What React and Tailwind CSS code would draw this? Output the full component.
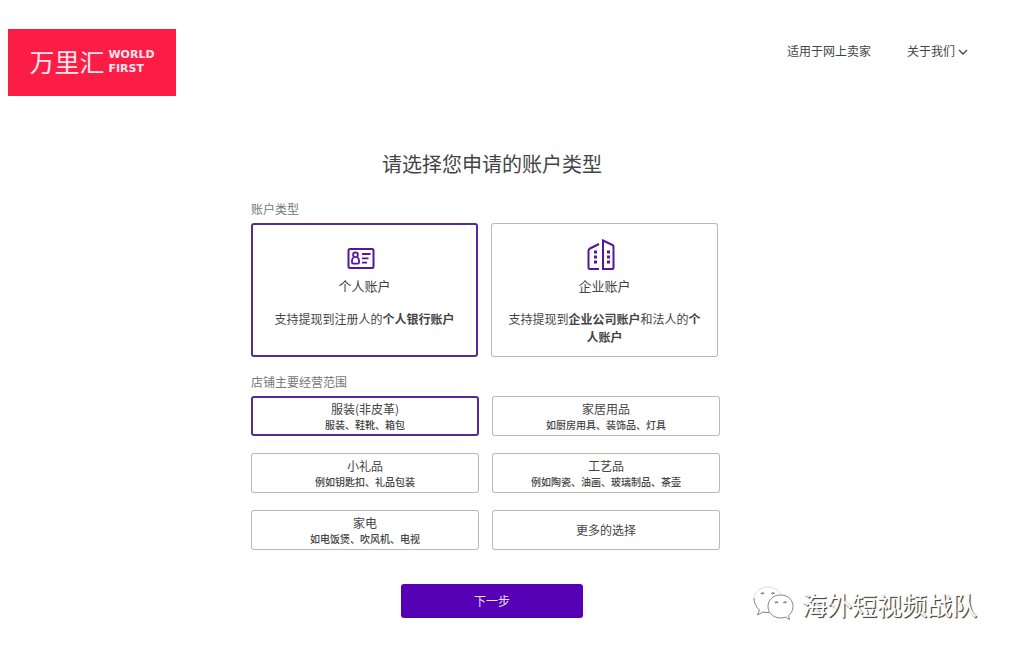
import { useState } from "react";

const accounts = [
  {
    id: "personal",
    title: "个人账户",
    Icon: IdCardIcon,
    description: (
      <>
        支持提现到注册人的<b className="font-bold">个人银行账户</b>
      </>
    ),
  },
  {
    id: "company",
    title: "企业账户",
    Icon: BuildingIcon,
    description: (
      <>
        支持提现到<b className="font-bold">企业公司账户</b>和法人的
        <b className="font-bold">个人账户</b>
      </>
    ),
  },
];

const categories = [
  { id: "clothes", title: "服装(非皮革)", detail: "服装、鞋靴、箱包" },
  { id: "home", title: "家居用品", detail: "如厨房用具、装饰品、灯具" },
  { id: "gifts", title: "小礼品", detail: "例如钥匙扣、礼品包装" },
  { id: "crafts", title: "工艺品", detail: "例如陶瓷、油画、玻璃制品、茶壶" },
  { id: "appliances", title: "家电", detail: "如电饭煲、吹风机、电视" },
  { id: "more", title: "更多的选择" },
];

function IdCardIcon() {
  return (
    <svg className="h-[31px] w-7" viewBox="0 0 28 31" fill="none" stroke="#55159f" strokeWidth="2" aria-hidden="true">
      <rect x="1.500" y="10" width="25" height="19" rx="1.5" />
      <circle cx="8.500" cy="15.800" r="2.400" strokeWidth="1.800" />
      <path
        d="M6.800 18.200C5.600 18.800 5 20 5 21.600v1.800c0 .7.500 1.200 1.200 1.200h4.600c.7 0 1.200-.5 1.200-1.200v-1.800c0-1.600-.6-2.800-1.800-3.400"
        strokeWidth="1.800"
      />
      <path d="M15 15h8.500M15 19.300h6.500M15 23.700h5" strokeWidth="1.800" />
    </svg>
  );
}

function BuildingIcon() {
  return (
    <svg className="h-[31px] w-7" viewBox="0 0 28 31" fill="none" stroke="#55159f" strokeWidth="2" aria-hidden="true">
      <path d="M12 5L3 9.500Q1.500 10.300 1.500 12v16.500q0 1.500 1.500 1.500h9" />
      <path d="M16 1.500l9.500 4.500q1 .5 1 1.700V28.500q0 1.500-1.500 1.500h-9z" />
      <path d="M7 13h3M7 18h3M7 23h3M20 13h3M20 18h3M20 23h3" strokeWidth="2.800" />
    </svg>
  );
}

function Logo() {
  return (
    <a
      href="#home"
      aria-label="万里汇 WORLD FIRST"
      className="flex h-[67px] w-[168px] items-center justify-center gap-1 bg-[#fc1d47] pb-1 text-[#ffe6ec]"
    >
      <span className="text-[25px] leading-8">万里汇</span>
      <span className="flex flex-col pt-0.5 font-['DejaVu_Sans',sans-serif] text-[11px] leading-[14px] font-bold">
        <span>WORLD</span>
        <span>FIRST</span>
      </span>
    </a>
  );
}

function Choice({ name, value, selected, onSelect, className, children }) {
  return (
    <label
      className={`relative flex cursor-pointer flex-col items-center rounded-[3px] text-center ring-inset ${
        selected ? "ring-2 ring-[#562a94]" : "ring-1 ring-[#bababa]"
      } ${className}`}
    >
      <input
        type="radio"
        name={name}
        value={value}
        checked={selected}
        onChange={() => onSelect(value)}
        className="sr-only"
      />
      {children}
    </label>
  );
}

function Watermark() {
  return (
    <div className="absolute right-8 bottom-7 flex items-center gap-2">
      <svg className="h-9 w-[42px]" viewBox="0 0 42 36" fill="#fff" stroke="#858585" strokeWidth="1" aria-hidden="true">
        <path d="M29 9C27 4 22 1 16 1 8 1 2 6.500 2 13.500" stroke="#dedede" />
        <path d="M2 12c0 5 2 9 5.500 12l-2 5 5.500-3q3 .8 6 .5" />
        <path d="M28.500 9C21 9 16 14 16 20.500S21.500 32 28.500 32q2.500 0 5-.8l4 2.300-1-4c2.500-2 4.500-5 4.500-9C41 14 36 9 28.500 9z" />
        <path d="M9 8q1.500-2 3 0M19.500 8q1.500-2 3 0M23 17q1.500-2 3 0M31.500 17q1.500-2 3 0" strokeWidth="1.300" />
      </svg>
      <span className="text-[25px] leading-9 text-white [text-shadow:1px_1px_1px_#444,1px_1px_0_#777]">
        海外短视频战队
      </span>
    </div>
  );
}

export default function App() {
  const [account, setAccount] = useState("personal");
  const [category, setCategory] = useState("clothes");

  return (
    <div className="relative min-h-screen bg-white pt-[29px] font-['Noto_Sans_CJK_SC',sans-serif] text-[#444]">
      <header className="flex items-start justify-between pr-10 pl-2">
        <Logo />
        <nav className="flex items-center gap-9 pt-3 text-xs leading-5">
          <a href="#sellers">适用于网上卖家</a>
          <button type="button" className="flex items-center gap-0.5">
            关于我们
            <svg className="mt-0.5 h-3 w-3" viewBox="0 0 12 12" fill="none" stroke="#444" strokeWidth="1.300" aria-hidden="true">
              <path d="M2 4l4 4 4-4" />
            </svg>
          </button>
        </nav>
      </header>

      <main className="pt-[53px] pr-[25px]">
        <form className="mx-auto flex max-w-[482px] flex-col" onSubmit={(e) => e.preventDefault()}>
          <h1 className="text-center text-xl leading-[30px]">请选择您申请的账户类型</h1>

          <div className="pt-5 pr-[13px]">
            <fieldset>
              <legend className="pb-1 text-xs leading-5 text-[#777]">账户类型</legend>
              <div className="grid grid-cols-2 gap-[13px] pr-0.5">
                {accounts.map(({ id, title, Icon, description }) => (
                  <Choice
                    key={id}
                    name="account"
                    value={id}
                    selected={account === id}
                    onSelect={setAccount}
                    className="min-h-[134px] px-3.5 pt-4"
                  >
                    <span className="pr-2">
                      <Icon />
                    </span>
                    <span className="mt-1.5 text-[13px] leading-5">{title}</span>
                    <span className="mt-3.5 text-xs leading-[18px]">{description}</span>
                  </Choice>
                ))}
              </div>
            </fieldset>

            <fieldset className="pt-[15px]">
              <legend className="contents">
                <span className="block pb-1 text-xs leading-5 text-[#777]">店铺主要经营范围</span>
              </legend>
              <div className="grid grid-cols-2 gap-x-[13px] gap-y-[17px]">
                {categories.map(({ id, title, detail }) => (
                  <Choice
                    key={id}
                    name="category"
                    value={id}
                    selected={category === id}
                    onSelect={setCategory}
                    className={`min-h-10 justify-center px-2 ${detail ? "pt-0.5" : ""}`}
                  >
                    <span className="text-xs leading-4">{title}</span>
                    {detail && <span className="text-[10px] leading-4 font-medium">{detail}</span>}
                  </Choice>
                ))}
              </div>
            </fieldset>
          </div>

          <button
            type="submit"
            className="mt-[34px] h-[34px] w-[182px] self-center rounded-[3px] bg-[#5500b5] text-xs text-[#f0dfff]"
          >
            下一步
          </button>
        </form>
      </main>

      <Watermark />
    </div>
  );
}
